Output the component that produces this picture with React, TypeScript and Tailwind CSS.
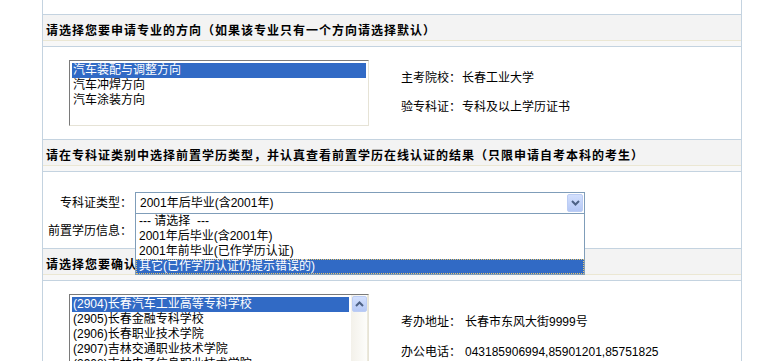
import React from "react";

const font = "font-['Liberation_Sans','Noto_Sans_CJK_SC',sans-serif]";

const Header = ({ text }: { text: string }) => (
  <div className="border-b border-[#c4d3e0]">
    <div className="h-[25px] bg-[#f3f3f3] pl-[3px] pt-[9px] text-[12px] font-bold leading-[14px] tracking-[1px] whitespace-nowrap overflow-hidden">
      {text}
    </div>
    <div className="h-px bg-[#ebe7d3]" />
    <div className="h-[5px] bg-[#f7f7f7]" />
  </div>
);

const Chevron = ({ up }: { up?: boolean }) => (
  <svg width="9" height="6" viewBox="0 0 9 6">
    <path
      d={up ? "M1 5 L4.5 1.5 L8 5" : "M1 1 L4.5 4.5 L8 1"}
      fill="none"
      stroke="#4d6185"
      strokeWidth="2"
    />
  </svg>
);

const Info = ({ label, value, wide }: { label: string; value: string; wide?: boolean }) => (
  <div className="flex h-[14px] leading-[14px] text-[12px] whitespace-nowrap">
    <span className={wide ? "w-[64px]" : "w-[61px]"}>{label}</span>
    <span>{value}</span>
  </div>
);

const majors = ["汽车装配与调整方向", "汽车冲焊方向", "汽车涂装方向"];
const typeOptions = ["--- 请选择  ---", "2001年后毕业(含2001年)", "2001年前毕业(已作学历认证)", "其它(已作学历认证仍提示错误的)"];
const schools = [
  "(2904)长春汽车工业高等专科学校",
  "(2905)长春金融专科学校",
  "(2906)长春职业技术学院",
  "(2907)吉林交通职业技术学院",
  "(2908)吉林电子信息职业技术学院",
  "(2909)吉林工业职业技术学院",
];

export default function App() {
  return (
    <div className={`relative w-[768px] h-[361px] overflow-hidden bg-white text-black ${font}`}>
      <div className="ml-[42px] w-[700px] border-x border-[#c4d3e0]">
        <div className="h-[15px] border-b border-[#c4d3e0]" />
        <Header text="请选择您要申请专业的方向（如果该专业只有一个方向请选择默认）" />

        {/* direction */}
        <div className="flex h-[93px] border-b border-[#c4d3e0] pt-[13px] pl-[26px]">
          <div className="w-[300px] h-[66px] border border-t-[#7a7a7a] border-l-[#7a7a7a] border-r-[#e6e3d6] border-b-[#e6e3d6] p-[2px]">
            {majors.map((m, i) => (
              <div
                key={m}
                className={`h-[15px] leading-[15px] pl-[1px] text-[12px] ${i === 0 ? "bg-[#316ac5] text-white" : ""}`}
              >
                {m}
              </div>
            ))}
          </div>
          <div className="ml-[32px] pt-[11px] flex flex-col gap-[15px]">
            <Info label="主考院校：" value="长春工业大学" />
            <Info label="验专科证：" value="专科及以上学历证书" />
          </div>
        </div>

        <Header text="请在专科证类别中选择前置学历类型，并认真查看前置学历在线认证的结果（只限申请自考本科的考生）" />

        {/* certificate type */}
        <div className="h-[77px] border-b border-[#c4d3e0] pt-[20px] flex flex-col gap-[6px] text-[12px]">
          <div className="flex items-center">
            <span className="w-[89px] text-right">专科证类型：</span>
            <div className="ml-[3px] w-[450px] h-[22px] border border-[#7f9db9] flex items-center justify-between pl-[4px] pr-[1px]">
              <span>2001年后毕业(含2001年)</span>
              <div className="w-[16px] h-[18px] rounded-[2px] border border-[#bccdf4] bg-gradient-to-b from-[#d3e0fd] to-[#b5c8f5] flex items-center justify-center">
                <Chevron />
              </div>
            </div>
          </div>
          <div className="flex items-center h-[22px]">
            <span className="w-[89px] text-right">前置学历信息：</span>
          </div>
        </div>

        <Header text="请选择您要确认的报考考区及考办" />

        {/* exam office */}
        <div className="flex pt-[13px] pl-[26px] h-[120px]">
          <div className="w-[300px] h-[100px] flex border border-t-[#7a7a7a] border-l-[#7a7a7a] border-r-[#e6e3d6] border-b-[#e6e3d6]">
            <div className="flex-1 p-[2px] text-[12px]">
              {schools.map((s, i) => (
                <div
                  key={s}
                  className={`h-[15px] leading-[15px] pl-[1px] whitespace-nowrap ${i === 0 ? "bg-[#316ac5] text-white" : ""}`}
                >
                  {s}
                </div>
              ))}
            </div>
            <div className="w-[17px] bg-gradient-to-r from-[#f3f1ea] to-[#fdfdfb] border-r border-[#ece9dc] pt-[1px] pl-[1px]">
              <div className="w-[15px] h-[16px] rounded-[2px] border border-[#bccdf4] bg-gradient-to-b from-[#d3e0fd] to-[#b5c8f5] flex items-center justify-center">
                <Chevron up />
              </div>
            </div>
          </div>
          <div className="ml-[32px] pt-[21px] flex flex-col gap-[16px]">
            <Info wide label="考办地址：" value="长春市东风大街9999号" />
            <Info wide label="办公电话：" value="043185906994,85901201,85751825" />
            <Info wide label="邮政编码：" value="130011" />
          </div>
        </div>
      </div>

      {/* open dropdown list */}
      <div className="absolute left-[135px] top-[213px] w-[450px] border border-[#7f9db9] bg-white text-[12px]">
        {typeOptions.map((o, i) => (
          <div
            key={o}
            className={`h-[15px] leading-[13px] pl-[2px] whitespace-pre ${
              i === 3 ? "bg-[#316ac5] text-white border border-dotted border-[#e8c56a]" : "border border-transparent"
            }`}
          >
            {o}
          </div>
        ))}
      </div>
    </div>
  );
}
